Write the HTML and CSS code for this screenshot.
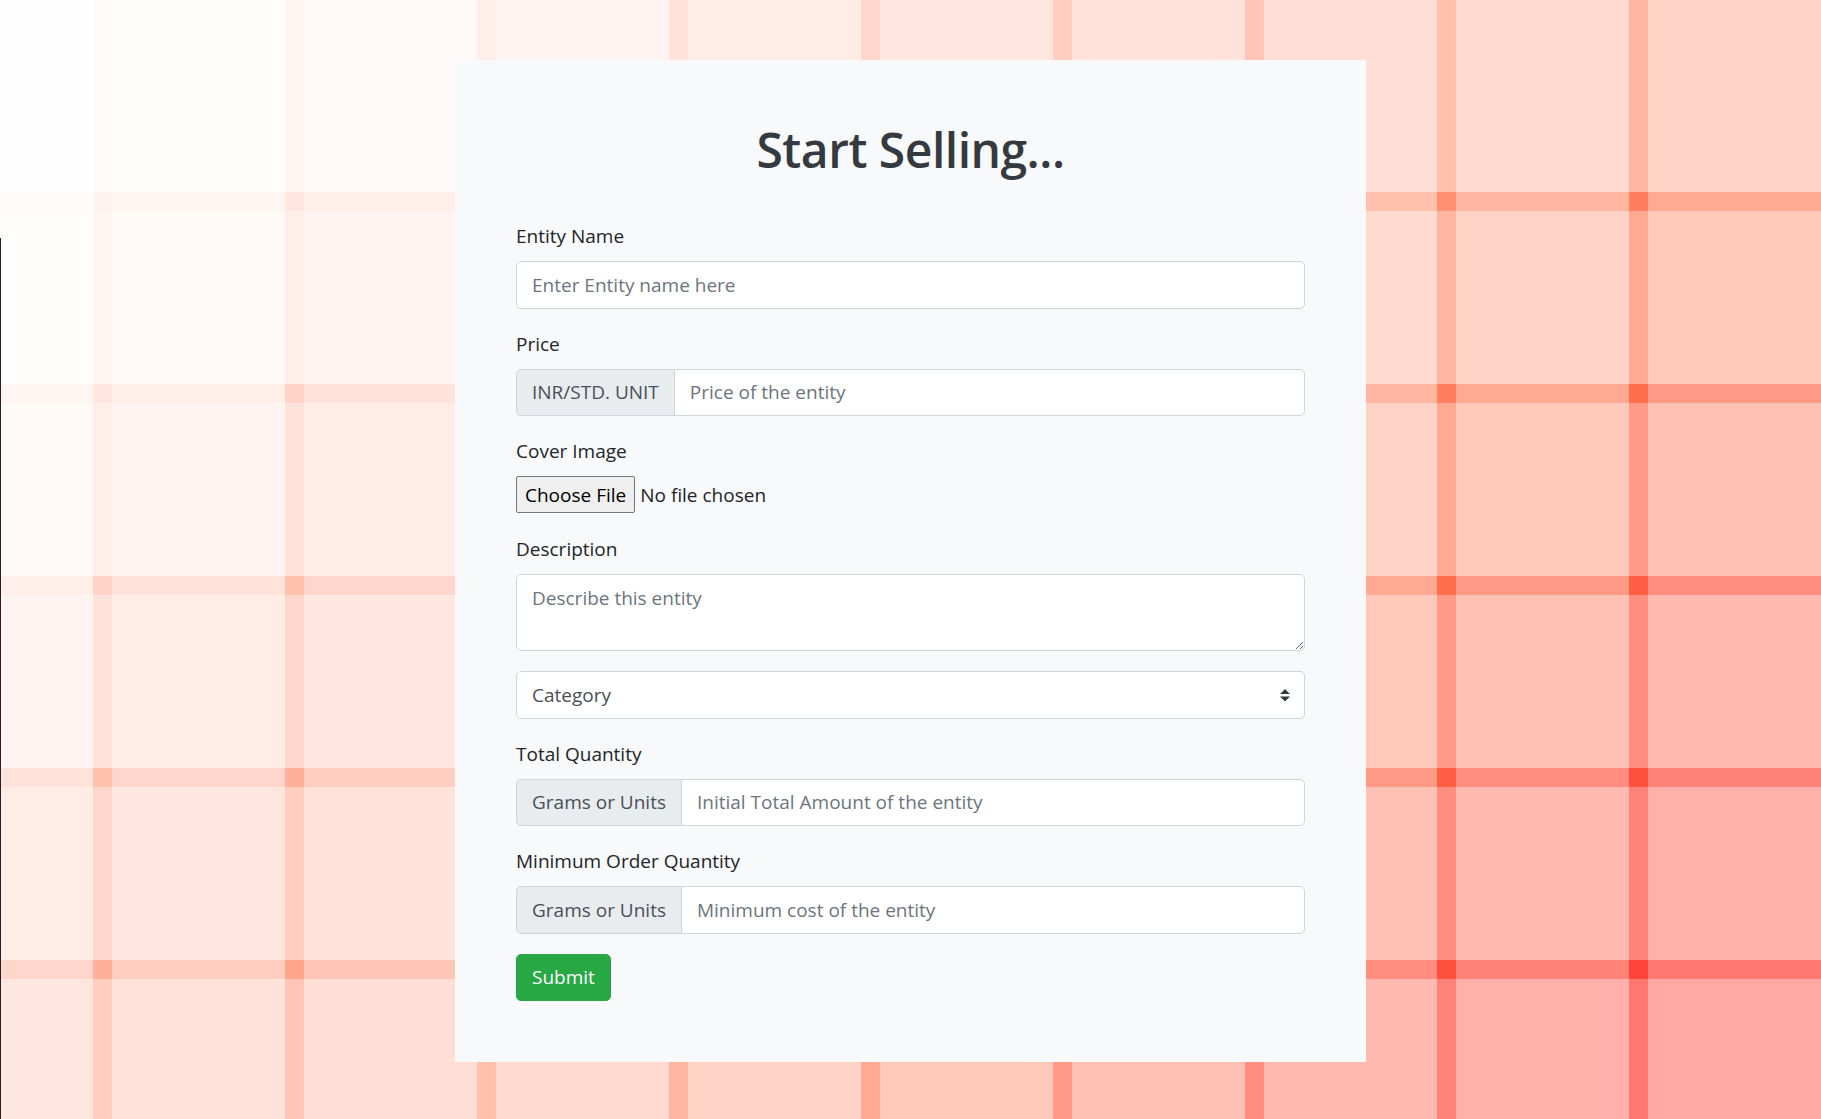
FILE: index.html
```html
<!DOCTYPE html>
<html lang="en">
<head>
<meta charset="utf-8">
<title>Start Selling</title>
<link rel="stylesheet" href="styles.css">
</head>
<body>
<div class="backdrop" aria-hidden="true">
  <div class="plaid">
    <div class="cell s0"></div><div class="cell s1"></div><div class="cell s2"></div><div class="cell s3"></div><div class="cell s4"></div><div class="cell s5"></div><div class="cell s6"></div><div class="cell s7"></div><div class="cell s8"></div><div class="cell s9"></div>
    <div class="cell s1"></div><div class="cell s2"></div><div class="cell s3"></div><div class="cell s4"></div><div class="cell s5"></div><div class="cell s6"></div><div class="cell s7"></div><div class="cell s8"></div><div class="cell s9"></div><div class="cell s10"></div>
    <div class="cell s2"></div><div class="cell s3"></div><div class="cell s4"></div><div class="cell s5"></div><div class="cell s6"></div><div class="cell s7"></div><div class="cell s8"></div><div class="cell s9"></div><div class="cell s10"></div><div class="cell s11"></div>
    <div class="cell s3"></div><div class="cell s4"></div><div class="cell s5"></div><div class="cell s6"></div><div class="cell s7"></div><div class="cell s8"></div><div class="cell s9"></div><div class="cell s10"></div><div class="cell s11"></div><div class="cell s12"></div>
    <div class="cell s4"></div><div class="cell s5"></div><div class="cell s6"></div><div class="cell s7"></div><div class="cell s8"></div><div class="cell s9"></div><div class="cell s10"></div><div class="cell s11"></div><div class="cell s12"></div><div class="cell s13"></div>
    <div class="cell s5"></div><div class="cell s6"></div><div class="cell s7"></div><div class="cell s8"></div><div class="cell s9"></div><div class="cell s10"></div><div class="cell s11"></div><div class="cell s12"></div><div class="cell s13"></div><div class="cell s14"></div>
  </div>
</div>
<div class="edge-line" aria-hidden="true"></div>

<main class="page">
  <form class="card" onsubmit="return false">
    <h1 class="title">Start Selling...</h1>

    <div class="form-group">
      <label class="label" for="name">Entity Name</label>
      <input class="control" id="name" type="text" placeholder="Enter Entity name here">
    </div>

    <div class="form-group">
      <label class="label" for="price">Price</label>
      <div class="input-group">
        <span class="addon">INR/STD. UNIT</span>
        <input class="control grouped" id="price" type="text" placeholder="Price of the entity">
      </div>
    </div>

    <div class="form-group">
      <label class="label" for="cover">Cover Image</label>
      <input class="file-input" id="cover" type="file">
    </div>

    <div class="form-group">
      <label class="label" for="desc">Description</label>
      <textarea class="control textarea" id="desc" rows="2" placeholder="Describe this entity"></textarea>
    </div>

    <div class="form-group select-wrap">
      <select class="control select">
        <option>Category</option>
      </select>
      <svg class="select-arrow" viewBox="0 0 4 5" aria-hidden="true"><path d="M2 0L0 2h4zm0 5L0 3h4z"/></svg>
    </div>

    <div class="form-group">
      <label class="label" for="total">Total Quantity</label>
      <div class="input-group">
        <span class="addon">Grams or Units</span>
        <input class="control grouped" id="total" type="text" placeholder="Initial Total Amount of the entity">
      </div>
    </div>

    <div class="form-group">
      <label class="label" for="moq">Minimum Order Quantity</label>
      <div class="input-group">
        <span class="addon">Grams or Units</span>
        <input class="control grouped" id="moq" type="text" placeholder="Minimum cost of the entity">
      </div>
    </div>

    <button class="submit" type="submit">Submit</button>
  </form>
</main>
</body>
</html>
```

FILE: styles.css
```css
* { box-sizing: border-box; }

html, body {
  margin: 0;
  padding: 0;
  height: 100%;
  overflow: hidden;
}

body {
  font-family: "Open Sans", "Noto Sans", "Liberation Sans", sans-serif;
  font-size: 19px;
  line-height: 30px;
  color: #212529;
  background: #ffffff;
}

/* ---------- plaid backdrop ---------- */
.backdrop {
  position: fixed;
  inset: 0;
  overflow: hidden;
  background: #ffffff;
  z-index: 0;
}

.plaid {
  display: grid;
  grid-template-columns: repeat(10, 192px);
  grid-auto-rows: 192px;
  margin-left: -99px;
  width: 1920px;
}

.cell {
  width: 211px;
  height: 211px;
}

.s0  { background: rgba(255, 80, 32, 0.004); }
.s1  { background: rgba(255, 80, 32, 0.015); }
.s2  { background: rgba(255, 80, 32, 0.035); }
.s3  { background: rgba(255, 80, 32, 0.063); }
.s4  { background: rgba(255, 80, 32, 0.111); }
.s5  { background: rgba(255, 80, 32, 0.1375); }
.s6  { background: rgba(255, 80, 32, 0.164); }
.s7  { background: rgba(255, 82, 32, 0.19); }
.s8  { background: rgba(255, 85, 32, 0.217); }
.s9  { background: rgba(255, 70, 20, 0.2435); }
.s10 { background: rgba(255, 55, 8, 0.27); }
.s11 { background: rgba(255, 45, 6, 0.2965); }
.s12 { background: rgba(255, 37, 10, 0.323); }
.s13 { background: rgba(255, 30, 14, 0.3495); }
.s14 { background: rgba(255, 24, 18, 0.376); }

.edge-line {
  position: fixed;
  left: 0;
  top: 238px;
  bottom: 0;
  width: 1px;
  background: #22202e;
  z-index: 2;
}

/* ---------- page + card ---------- */
.page {
  position: relative;
  z-index: 1;
  padding-top: 60px;
}

.card {
  width: 911px;
  margin: 0 auto;
  padding: 60px 61px 61px;
  background: #f8f9fa;
}

.title {
  margin: 0 0 41px;
  text-align: center;
  font-size: 48px;
  line-height: 60px;
  font-weight: 600;
  color: #343a40;
  letter-spacing: -0.5px;
}

.form-group {
  margin-bottom: 20px;
}

.label {
  display: block;
  margin-bottom: 10px;
  line-height: 30px;
}

.control {
  display: block;
  width: 100%;
  height: 47.5px;
  padding: 7.5px 15px;
  font: inherit;
  font-size: 19px;
  line-height: 30px;
  color: #495057;
  background: #ffffff;
  border: 1px solid #ced4da;
  border-radius: 5px;
  outline: none;
}

.control::placeholder {
  color: #6c757d;
  opacity: 1;
}

.input-group {
  display: flex;
  align-items: stretch;
}

.addon {
  display: flex;
  align-items: center;
  flex: 0 0 auto;
  padding: 7.5px 15px;
  color: #495057;
  background: #e9ecef;
  border: 1px solid #ced4da;
  border-radius: 5px 0 0 5px;
  white-space: nowrap;
}

.grouped {
  flex: 1 1 auto;
  width: auto;
  min-width: 0;
  margin-left: -1px;
  border-radius: 0 5px 5px 0;
}

.file-input {
  display: block;
  height: 38px;
  font: inherit;
  font-size: 19px;
  line-height: 36px;
  color: #212529;
}

.file-input::file-selector-button {
  height: 37px;
  margin-right: 5px;
  padding: 0 8px;
  font: inherit;
  font-size: 19px;
  color: #000000;
  background: #efefef;
  border: 1px solid #767676;
  border-radius: 2px;
}

.textarea {
  height: 77px;
  resize: vertical;
}

.select-wrap {
  position: relative;
}

.select {
  appearance: none;
  -webkit-appearance: none;
  padding-right: 40px;
  color: #495057;
}

.select-arrow {
  position: absolute;
  right: 15px;
  top: 17.5px;
  width: 10px;
  height: 12.5px;
  fill: #343a40;
  pointer-events: none;
}

.submit {
  display: inline-block;
  height: 47.5px;
  padding: 7.5px 15px;
  font: inherit;
  font-size: 19px;
  line-height: 30px;
  color: #ffffff;
  background: #28a745;
  border: 1px solid #28a745;
  border-radius: 5px;
  cursor: pointer;
}
```
